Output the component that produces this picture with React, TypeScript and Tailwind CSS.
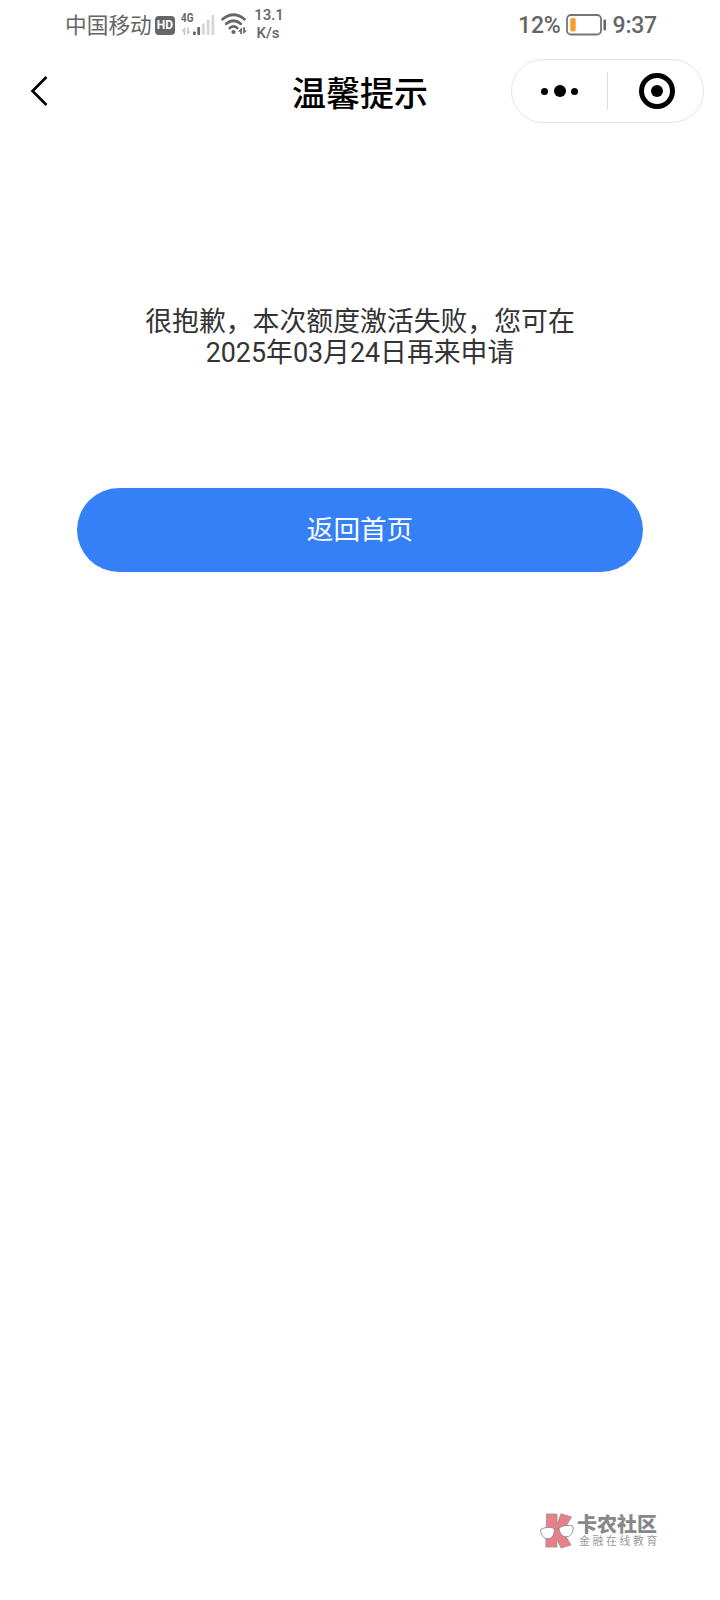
const SignalIcon = () => (
  <svg width="36" height="26" viewBox="0 0 36 26">
    <path d="M3.6 13.5L.4 17.5h2.2v3.5h1.8v-7.5zM6 13.5v7.5l3.6-3.5H7.8v-4z" fill="#c8c8c8" />
    <rect x="12" y="17.5" width="2.8" height="3.5" rx="0.8" fill="#666" />
    <rect x="16.3" y="13" width="2.8" height="8" rx="0.8" fill="#666" />
    <rect x="21" y="9.5" width="2.8" height="11.5" rx="0.8" fill="#d6d6d6" />
    <rect x="25.7" y="5.5" width="2.8" height="15.5" rx="0.8" fill="#d6d6d6" />
    <rect x="30.5" y="1" width="2.8" height="20" rx="0.8" fill="#d6d6d6" />
  </svg>
)

const WifiIcon = () => (
  <svg width="28" height="22" viewBox="0 0 28 22" fill="none">
    <path d="M1.5 6.2Q12.5-2.7 23.5 6.2" stroke="#666" strokeWidth="2.7" strokeLinecap="round" />
    <path d="M5.2 10.8Q12.5 4.7 19.8 10.8" stroke="#666" strokeWidth="2.7" strokeLinecap="round" />
    <path d="M8.8 15Q12.5 11.8 16.2 15" stroke="#666" strokeWidth="2.7" strokeLinecap="round" />
    <circle cx="12.5" cy="19" r="2.1" fill="#666" />
    <path d="M20.9 14.2V21h-1.7v-2.3H17zM22.2 14.2V21l4-3.500h-2.200v-3.300z" fill="#666" />
  </svg>
)

const BatteryIcon = () => (
  <svg width="41" height="22" viewBox="0 0 41 22" fill="none">
    <rect x="1" y="1" width="34" height="19.5" rx="4" stroke="#757575" strokeWidth="1.8" />
    <rect x="4.3" y="4" width="5.4" height="13.4" rx="1.5" fill="#f79f2d" />
    <rect x="37.5" y="5.5" width="2.6" height="11" rx="1.2" fill="#666" />
  </svg>
)

const LogoIcon = () => (
  <svg width="34" height="36" viewBox="0 0 34 36" fill="none">
    <path d="M6.5 1H17v10L21 .8 31.5 4 23 18.5 31 32l-10 3-4-9v8H5.8z" fill="#e97f88" stroke="#999" strokeWidth="0.9" />
    <path d="M.7 16.5Q7 12.8 14 15.3C15 21.5 12 25.8 7.8 25.8 3.5 25.8.5 22 .7 16.5z" fill="#fff" stroke="#8a8a8a" strokeWidth="0.9" />
    <path d="M19 14.8Q26 10.8 33 13.2C33.8 18.5 31 23.5 26.8 23.8 22.5 24 19.3 20.5 19 14.8z" fill="#fff" stroke="#8a8a8a" strokeWidth="0.9" />
    <path d="M14.2 16.5Q16.5 14.5 19 16" stroke="#8a8a8a" strokeWidth="0.9" />
  </svg>
)

const StatusBar = () => {
  return (
    <div className="flex h-[50px] items-center justify-between pl-[65px] pr-[63px] text-[#666]">
      <div className="flex items-center">
        <span className="w-[87px] whitespace-nowrap pt-px text-[21.7px] leading-none">中国移动</span>
        <span className="ml-[3px] flex h-[19px] w-[20px] items-center justify-center rounded-[4px] bg-[#666] text-[12px] font-bold leading-none text-white">HD</span>
        <div className="relative ml-[6px] mt-[-3px] h-[26px] w-[36px]">
          <div className="pt-[3px]"><SignalIcon /></div>
          <span className="absolute left-0 top-px origin-left scale-x-[0.82] text-[12px] font-bold leading-none">4G</span>
        </div>
        <div className="ml-[4px] mt-[-2px]"><WifiIcon /></div>
        <div className="ml-[4px] mt-[-2px] flex w-[32px] flex-col items-center whitespace-nowrap text-[15px] font-medium leading-[18px]">
          <span>13.1</span>
          <span className="mr-[2px]">K/s</span>
        </div>
      </div>
      <div className="flex items-center text-[23px] font-medium leading-none">
        <span className="tracking-[-0.2px]">12%</span>
        <div className="ml-[5px] mr-[6px] mt-[-1px]"><BatteryIcon /></div>
        <span className="tracking-[-0.2px]">9:37</span>
      </div>
    </div>
  )
}

const Header = () => {
  return (
    <div className="grid h-[82px] grid-cols-[1fr_136px_1fr] items-center">
      <button type="button" className="ml-[30px] w-[20px]">
        <svg width="20" height="32" viewBox="0 0 20 32" fill="none">
          <path d="M16.5 2L2.5 16l14 14" stroke="#000" strokeWidth="2.6" />
        </svg>
      </button>
      <h1 className="whitespace-nowrap pt-[5px] text-[34px] font-medium leading-none text-black">温馨提示</h1>
      <div className="mr-[16px] flex h-[64px] w-[193px] items-center justify-self-end rounded-full border border-[#e5e5e5]">
        <div className="flex w-[95px] items-center justify-center gap-[5.8px]">
          <span className="size-[7px] rounded-full bg-black" />
          <span className="size-[12px] rounded-full bg-black" />
          <span className="size-[7px] rounded-full bg-black" />
        </div>
        <div className="h-[38px] w-px bg-[#dcdcdc]" />
        <div className="flex flex-1 items-center justify-center">
          <div className="ml-[3px] flex size-[36px] items-center justify-center rounded-full border-[5px] border-black">
            <span className="size-[12px] rounded-full bg-black" />
          </div>
        </div>
      </div>
    </div>
  )
}

const App = () => {
  return (
    <div className="flex h-[1600px] w-[720px] flex-col bg-white font-[Roboto,'Noto_Sans_CJK_SC',sans-serif]">
      <StatusBar />
      <Header />
      <main className="flex flex-1 flex-col px-[77px] pt-[175px]">
        <p className="text-center text-[26.85px] leading-[31px] text-[#333]">
          很抱歉，本次额度激活失败，您可在
          <br />
          2025年03月24日再来申请
        </p>
        <button type="button" className="mt-[119px] h-[84px] w-full rounded-full bg-[#3680f7] text-[26.6px] leading-none text-white">
          返回首页
        </button>
      </main>
      <footer className="mb-[51px] mr-[60px] flex items-center self-end">
        <LogoIcon />
        <div className="ml-[3px] flex flex-col whitespace-nowrap pt-px">
          <span className="text-[20px] font-black leading-[21px] text-[#888]">卡农社区</span>
          <span className="ml-[2px] text-[10.8px] leading-[12px] tracking-[2.7px] text-[#999]">金融在线教育</span>
        </div>
      </footer>
    </div>
  )
}

export default App
